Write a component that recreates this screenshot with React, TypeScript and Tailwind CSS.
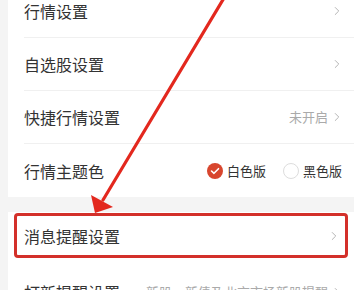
import { ChevronRight } from 'lucide-react';

const font = { fontFamily: '"Noto Sans CJK SC", "Noto Sans", sans-serif' };

function Chevron() {
  return <ChevronRight className="w-[14px] h-[14px] text-[#aaa]" strokeWidth={1.5} />;
}

function Row({ label, right, last }: { label: string; right?: React.ReactNode; last?: boolean }) {
  return (
    <div className={`h-[53px] shrink-0 flex items-center justify-between pr-[10px] ${last ? '' : 'border-b border-[#f0f0f0]'}`}>
      <span className="text-[16px] text-[#333]">{label}</span>
      {right ?? <Chevron />}
    </div>
  );
}

export default function App() {
  return (
    <div className="relative w-[354px] h-[290px] overflow-hidden bg-[#f4f4f4] flex" style={font}>
      <div className="ml-[8px] flex-1 flex flex-col">
        <div className="bg-white pl-[16px] -mt-[15px] shrink-0">
          <Row label="行情设置" />
          <Row label="自选股设置" />
          <Row
            label="快捷行情设置"
            right={
              <div className="flex items-center gap-[2px]">
                <span className="text-[13px] text-[#aaa]">未开启</span>
                <Chevron />
              </div>
            }
          />
          <Row
            label="行情主题色"
            last
            right={
              <div className="flex items-center text-[13px] text-[#333] pr-[2px]">
                <span className="w-[16px] h-[16px] rounded-full bg-[#d8462e] flex items-center justify-center mr-[4px]">
                  <svg width="10" height="8" viewBox="0 0 10 8">
                    <path d="M1.5 4 L4 6.3 L8.5 1.7" fill="none" stroke="#fff" strokeWidth="1.6" strokeLinecap="round" strokeLinejoin="round" />
                  </svg>
                </span>
                <span>白色版</span>
                <span className="w-[16px] h-[16px] rounded-full border border-[#ddd] ml-[17px] mr-[4px]" />
                <span>黑色版</span>
              </div>
            }
          />
        </div>
        <div className="h-[15px] shrink-0" />
        <div className="bg-white flex-1 pt-[1px] shrink-0">
          <div className="ml-[6px] mr-[6px] h-[45px] border-[3px] border-[#d3302a] rounded-[4px] flex items-center justify-between pl-[7px] pr-[4px]">
            <span className="text-[16px] text-[#333]">消息提醒设置</span>
            <Chevron />
          </div>
          <div className="mt-[7px] h-[53px] flex items-center justify-between pl-[16px] pr-[10px] whitespace-nowrap">
            <span className="text-[16px] text-[#333]">打新提醒设置</span>
            <div className="flex items-center gap-[2px]">
              <span className="text-[13px] text-[#aaa]">新股、新债及北京市场新股提醒</span>
              <Chevron />
            </div>
          </div>
        </div>
      </div>
      <svg className="absolute inset-0 pointer-events-none" width="354" height="290" viewBox="0 0 354 290">
        <line x1="224" y1="-2" x2="103" y2="200" stroke="#e3281e" strokeWidth="3.2" strokeLinecap="round" />
        <polygon points="95,213 91,195 113,207" fill="#e3281e" />
      </svg>
    </div>
  );
}
